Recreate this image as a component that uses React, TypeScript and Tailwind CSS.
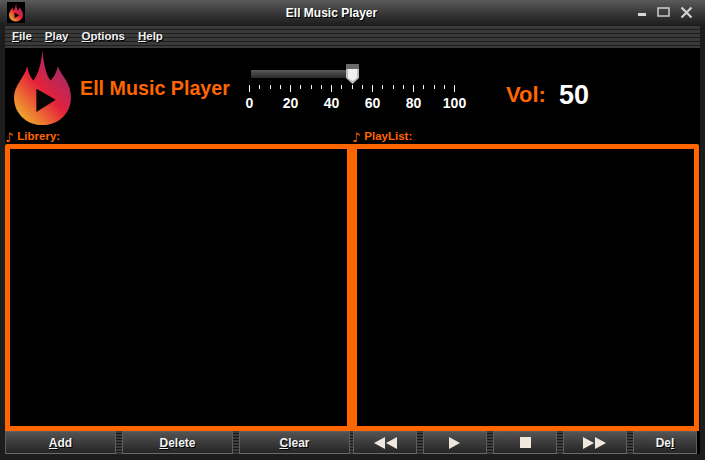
import React from 'react';

function Flame({ size, id }: { size: number; id: string }) {
  return (
    <svg width={size} height={size * 1.32} viewBox="0 0 56 74" className="block">
      <defs>
        <linearGradient id={id} x1="0.85" y1="0.15" x2="0.2" y2="0.95">
          <stop offset="0" stopColor="#9c2a70" />
          <stop offset="0.5" stopColor="#e4223a" />
          <stop offset="1" stopColor="#f0a52c" />
        </linearGradient>
      </defs>
      <path
        fill={`url(#${id})`}
        d="M28 0C29 12 31 24 36 30C39 27 42 22 43 16C47 26 56 32 56 47C56 62 44 74 28 74C12 74 0 62 0 47C0 34 10 28 13 16C14 22 16 27 19 30C24 24 27 12 28 0Z"
      />
      <path fill="#060606" d="M22 38L41 49L22 61Z" />
    </svg>
  );
}

function Grip({ w = 'w-[6px]' }: { w?: string }) {
  return <div className={`${w} shrink-0 bg-[repeating-linear-gradient(to_bottom,#3c3c3c_0,#3c3c3c_2px,#161616_2px,#161616_3px)]`} />;
}

function Btn({ className, children }: { className: string; children: React.ReactNode }) {
  return (
    <button className={`${className} shrink-0 flex items-center justify-center border border-[#5e5e5e] border-b-[#6a6a6a] bg-gradient-to-b from-[#535353] to-[#262626] text-[#f2f2f2] text-[12px] font-bold leading-none [text-shadow:1px_1px_0_#000]`}>
      {children}
    </button>
  );
}

function Tri({ left = false }: { left?: boolean }) {
  return (
    <svg width="12" height="12" viewBox="0 0 12 12" className="block">
      <path fill="#f0e8df" d={left ? 'M12 0V12L1 6Z' : 'M0 0V12L11 6Z'} />
    </svg>
  );
}

const ticks = Array.from({ length: 21 }, (_, i) => i);
const labels = [0, 20, 40, 60, 80, 100];

function Label({ text, className }: { text: string; className: string }) {
  return (
    <div className={`${className} flex items-center gap-[4px] pt-px text-[11.5px] font-bold text-[#ff6600] leading-none`}>
      <span className="font-['DejaVu_Sans'] text-[13px] font-bold">♪</span>
      <span>{text}</span>
    </div>
  );
}

export default function App() {
  return (
    <div className="w-[706px] h-[460px] bg-white overflow-hidden font-['Liberation_Sans',Arial,sans-serif]">
      <div className="w-[705px] h-[460px] flex flex-col bg-[#1d1d1d]">
        {/* title bar */}
        <div className="h-[25px] shrink-0 flex items-center pl-[7px] pr-[12px] bg-gradient-to-b from-[#5a5a5a] via-[#3a3a3a] to-[#1e1e1e]">
          <div className="w-[18px] h-[21px] bg-black flex items-center justify-center">
            <Flame size={14} id="flame-small" />
          </div>
          <div className="flex-1 text-center text-[12px] font-bold text-white leading-none [text-shadow:1px_1px_0_#000]">Ell Music Player</div>
          <div className="flex items-center gap-[10px]">
            <svg width="9" height="9" viewBox="0 0 9 9"><rect x="0" y="5" width="8" height="3" fill="#d8d8d8" /></svg>
            <svg width="13" height="11" viewBox="0 0 13 11"><rect x="1" y="1" width="11" height="8" fill="none" stroke="#d8d8d8" strokeWidth="1.4" /></svg>
            <svg width="13" height="13" viewBox="0 0 13 13"><path d="M1.5 1.5L11.5 11.5M11.5 1.5L1.5 11.5" stroke="#d0d0d0" strokeWidth="2.2" /></svg>
          </div>
        </div>

        {/* menu */}
        <div className="h-[23px] shrink-0 mx-[5px] flex items-center gap-[13px] pl-[7px] bg-[repeating-linear-gradient(to_bottom,#1c1c1c_0,#1c1c1c_1px,#3a3a3a_1px,#3a3a3a_4px)] text-[11.5px] font-bold text-[#f0f0f0] leading-none [text-shadow:1px_1px_0_#000]">
          <span><u>F</u>ile</span>
          <span><u>P</u>lay</span>
          <span><u>O</u>ptions</span>
          <span><u>H</u>elp</span>
        </div>

        {/* body */}
        <div className="flex-1 mx-[5px] bg-black flex flex-col">
          {/* header */}
          <div className="h-[81px] shrink-0 flex">
            <div className="w-[75px] shrink-0 pl-[9px] pt-[2px]">
              <Flame size={57} id="flame-big" />
            </div>
            <div className="w-[167px] shrink-0 pt-[31px] text-[19.7px] font-bold text-[#ff6600] leading-none whitespace-nowrap">Ell Music Player</div>
            <div className="w-[218px] shrink-0 pt-[18px] pl-[2px]">
              <div className="relative h-[16px]">
                <div className="absolute left-[2px] top-[4px] w-[97px] h-[8px] bg-gradient-to-b from-[#5a5a5a] to-[#2a2a2a]" />
                <svg className="absolute left-[97px] top-[-2px]" width="13" height="20" viewBox="0 0 13 20">
                  <path d="M0 0H13V14L6.5 20L0 14Z" fill="#bdbdbd" />
                  <rect x="0" y="0" width="13" height="5" fill="#6a6a6a" />
                  <path d="M2 5H11V14L6.5 17L2 14Z" fill="#f0f0f0" />
                </svg>
              </div>
              <div className="mt-[3px] w-[206px] h-[8px] flex justify-between items-start">
                {ticks.map(i => (
                  <div key={i} className={`w-px bg-white ${i % 4 === 0 ? 'h-[7px]' : 'h-[4px]'}`} />
                ))}
              </div>
              <div className="mt-[3px] -ml-[20px] flex text-[14px] font-bold text-white leading-none">
                {labels.map(l => (
                  <span key={l} className="w-[41px] shrink-0 text-center">{l}</span>
                ))}
              </div>
            </div>
            <div className="pt-[36px] pl-[41px] text-[22px] font-bold text-[#ff6600] leading-none">Vol:</div>
            <div className="pt-[34px] pl-[13px] text-[27px] font-bold text-white leading-none">50</div>
          </div>

          {/* labels */}
          <div className="h-[15px] shrink-0 flex">
            <Label text="Librery:" className="w-[347px]" />
            <Label text="PlayList:" className="flex-1" />
          </div>

          {/* panels */}
          <div className="h-[287px] shrink-0 flex">
            <div className="w-[347px] border-[5px] border-[#ff6600] rounded-tl-[2px] bg-black" />
            <div className="w-[347px] border-[5px] border-[#ff6600] rounded-tr-[2px] bg-black" />
          </div>

          {/* buttons */}
          <div className="h-[23px] shrink-0 flex">
            <Btn className="w-[111px]"><span><u>A</u>dd</span></Btn>
            <Grip />
            <Btn className="w-[111px]"><span><u>D</u>elete</span></Btn>
            <Grip />
            <Btn className="w-[111px]"><span><u>C</u>lear</span></Btn>
            <Grip w="w-[3px]" />
            <Btn className="w-[64px]"><span className="flex"><Tri left /><Tri left /></span></Btn>
            <Grip />
            <Btn className="w-[64px]"><Tri /></Btn>
            <Grip />
            <Btn className="w-[64px]"><span className="block w-[11px] h-[11px] bg-[#f0e8df]" /></Btn>
            <Grip />
            <Btn className="w-[64px]"><span className="flex"><Tri /><Tri /></span></Btn>
            <Grip />
            <Btn className="w-[64px]"><span>De<u>l</u></span></Btn>
          </div>
        </div>
        <div className="h-[6px] shrink-0 bg-[#1d1d1d]" />
      </div>
    </div>
  );
}
